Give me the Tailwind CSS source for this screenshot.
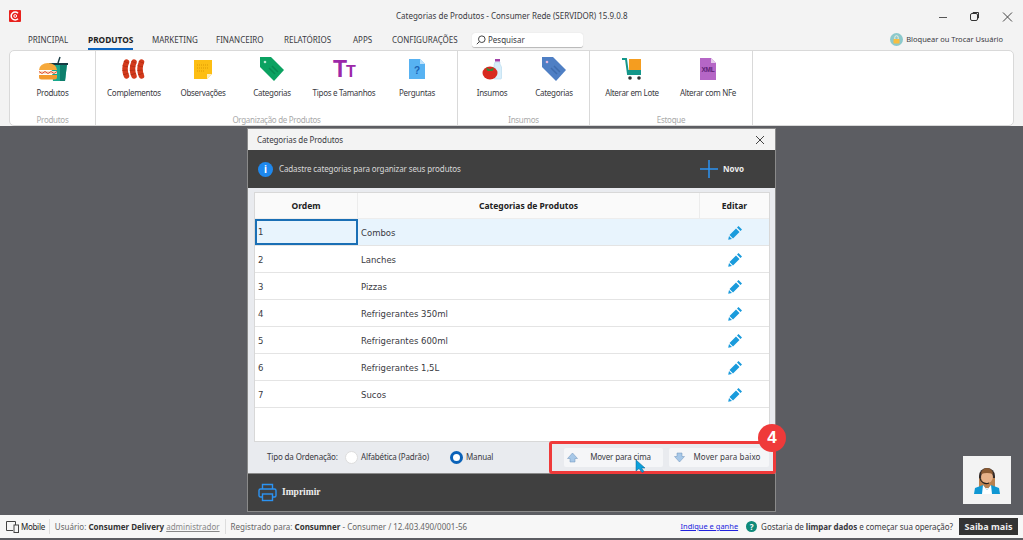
<!DOCTYPE html>
<html lang="pt-BR">
<head>
    <meta charset="UTF-8">
    <title>Categorias de Produtos - Consumer Rede</title>
    <script src="https://cdn.jsdelivr.net/npm/@tailwindcss/browser@4"></script>
</head>
<body class="w-[1023px] h-[540px] overflow-hidden bg-[#f3f3f3] font-['Noto_Sans',sans-serif] text-[8px] text-[#3a3a42] flex flex-col">

    <!-- Barra de titulo -->
    <div class="h-[33px] shrink-0 flex items-center relative">
        <div class="ml-[9px] mb-[1px] w-[12px] h-[12px] bg-[#e8211d] rounded-[1px] flex items-center justify-center">
            <svg width="10" height="10" viewBox="0 0 10 10" fill="none" stroke="#fff"><path d="M8 2.2A4 4 0 1 0 8 7.8" stroke-width="1.5"/><circle cx="5.2" cy="5" r="1.4" stroke-width="1"/></svg>
        </div>
        <div class="w-[229px] ml-[375px] mb-[1px] text-center whitespace-nowrap">Categorias de Produtos - Consumer Rede (SERVIDOR) 15.9.0.8</div>
        <div class="ml-auto flex items-center">
            <svg width="32" height="12" viewBox="0 0 32 12" fill="none" stroke="#555"><path d="M10 6.5h8"/></svg>
            <svg width="32" height="12" viewBox="0 0 32 12" fill="none" stroke="#333"><rect x="9.500" y="2.500" width="7" height="7" rx="1.500"/><path d="M12 2V1.500h5.500V7H17"/></svg>
            <svg width="30" height="12" viewBox="0 0 30 12" fill="none" stroke="#444"><path d="M10 1.500l9 9M19 1.500l-9 9"/></svg>
        </div>
    </div>

    <!-- Abas -->
    <div class="h-[17px] shrink-0 flex items-start pl-[28px] whitespace-nowrap">
        <div class="w-[60px] pt-[1px]">PRINCIPAL</div>
        <div class="w-[64px] pt-[1px]"><span class="block w-[45px] h-[16px] font-bold text-[8.3px] text-[#222] border-b-[2px] border-[#0a64c0]">PRODUTOS</span></div>
        <div class="w-[64px] pt-[1px]">MARKETING</div>
        <div class="w-[68px] pt-[1px]">FINANCEIRO</div>
        <div class="w-[69px] pt-[1px]">RELATÓRIOS</div>
        <div class="w-[39px] pt-[1px]">APPS</div>
        <div class="w-[80px] pt-[1px]">CONFIGURAÇÕES</div>
        <div class="w-[111px] h-[15px] bg-white rounded-[3px] border-b border-[#bbb] shadow-[0_0_1px_#ccc] flex items-center pl-[4px] gap-[2px]">
            <svg width="10" height="10" viewBox="0 0 10 10" fill="none" stroke="#444"><circle cx="5.800" cy="4.200" r="3.300"/><path d="M3.400 6.600L.8 9.200"/></svg>
            <span>Pesquisar</span>
        </div>
        <div class="ml-auto mr-[20px] flex items-center gap-[3px]">
            <svg width="13" height="13" viewBox="0 0 13 13"><circle cx="6.500" cy="6.500" r="6.500" fill="#8cc9cc"/><rect x="3.500" y="6" width="6" height="4.500" rx=".6" fill="#f6bd41"/><path d="M4.800 6V4.400a1.700 1.700 0 0 1 3.400 0V6" fill="none" stroke="#f3f0dc" stroke-width="1"/></svg>
            <span class="text-[7.5px]">Bloquear ou Trocar Usuário</span>
        </div>
    </div>

    <!-- Ribbon -->
    <div class="mx-[9px] h-[76px] w-[1005px] shrink-0 bg-white border border-[#d9d9d9] rounded-[5px] flex tracking-[-0.3px]">
        <div class="w-[86px] flex flex-col border-r border-[#d9d9d9]">
            <div class="flex-1 flex">
                <div class="w-[85px] flex flex-col items-center pt-[5px]">
                    <svg class="h-[26px]" width="30" height="26" viewBox="0 0 30 26"><path d="M13 8h16l-2 17H15z" fill="#18a88e"/><path d="M22 8h7l-2 17h-5z" fill="#0d7f6c"/><path d="M11 7h19v2H11z" fill="#173b44"/><path d="M20 7l2-6" stroke="#173b44" stroke-width="1.400"/><path d="M1 14a9 7 0 0 1 18 0z" fill="#f6a93b"/><path d="M1 15h18v3H1z" fill="#fbe2c6"/><path d="M1 15.500l3 2 3-2 3 2 3-2 3 2 3-2" fill="none" stroke="#e2503a" stroke-width="1"/><path d="M1 19h18v2a2.500 2.500 0 0 1-2.500 2.500h-13A2.500 2.500 0 0 1 1 21z" fill="#f39a2e"/></svg>
                    <div class="mt-[5px] leading-[12px]">Produtos</div>
                </div>
            </div>
            <div class="h-[12px] text-center text-[#aaa] leading-[14px]">Produtos</div>
        </div>
        <div class="w-[362px] flex flex-col border-r border-[#d9d9d9]">
            <div class="flex-1 flex">
                <div class="w-[76px] flex flex-col items-center pt-[5px]">
                    <svg class="h-[26px]" width="24" height="26" viewBox="0 0 24 26" fill="none" stroke-linecap="round"><g stroke="#d33a1c" stroke-width="5.500"><path d="M4.500 6Q1.500 13 4.500 20"/><path d="M12 6Q9 13 12 20"/><path d="M19.500 6Q16.500 13 19.500 20"/></g><g stroke="#a82a10" stroke-width="5.500" stroke-dasharray=".6 3.400" stroke-linecap="butt"><path d="M4.500 6Q1.500 13 4.500 20"/><path d="M12 6Q9 13 12 20"/><path d="M19.500 6Q16.500 13 19.500 20"/></g></svg>
                    <div class="mt-[5px] leading-[12px]">Complementos</div>
                </div>
                <div class="w-[62px] flex flex-col items-center pt-[5px]">
                    <svg class="h-[26px]" width="20" height="26" viewBox="0 0 20 26"><path d="M1 4h18v14l-5 5H1z" fill="#fdbe13"/><path d="M14 23l5-5h-5z" fill="#fdeec0"/><path d="M4 9h12M4 12h12M4 15h8" stroke="#dd9a05" stroke-dasharray="1 1"/></svg>
                    <div class="mt-[5px] leading-[12px]">Observações</div>
                </div>
                <div class="w-[76px] flex flex-col items-center pt-[5px]">
                    <svg class="h-[26px]" width="26" height="26" viewBox="0 0 26 26"><path d="M1 1h11l13 13-10 11L1 11z" fill="#0ba261"/><circle cx="6" cy="6" r="1.300" fill="#b9e7cf"/><path d="M10 12l6 6M13 10l6 6" stroke="#088a52" stroke-width="1.500"/></svg>
                    <div class="mt-[5px] leading-[12px]">Categorias</div>
                </div>
                <div class="w-[68px] flex flex-col items-center pt-[5px]">
                    <svg class="h-[26px]" width="26" height="26" viewBox="0 0 26 26"><text x="2" y="21" font-family="Liberation Sans" font-weight="700" font-size="23" fill="#9c27a8">T</text><text x="15" y="21" font-family="Liberation Sans" font-weight="700" font-size="16" fill="#9c27a8">T</text></svg>
                    <div class="mt-[5px] leading-[12px] whitespace-nowrap">Tipos e Tamanhos</div>
                </div>
                <div class="w-[78px] flex flex-col items-center pt-[5px]">
                    <svg class="h-[26px]" width="18" height="26" viewBox="0 0 18 26"><path d="M1 3h11l5 5v15H1z" fill="#57b2f2"/><path d="M12 3l5 5h-5z" fill="#bde1fb"/><text x="9" y="18" text-anchor="middle" font-family="Liberation Sans" font-weight="700" font-size="10" fill="#1a63b5">?</text></svg>
                    <div class="mt-[5px] leading-[12px]">Perguntas</div>
                </div>
            </div>
            <div class="h-[12px] text-center text-[#aaa] leading-[14px]">Organização de Produtos</div>
        </div>
        <div class="w-[132px] flex flex-col border-r border-[#d9d9d9]">
            <div class="flex-1 flex">
                <div class="w-[68px] flex flex-col items-center pt-[5px]">
                    <svg class="h-[26px]" width="20" height="26" viewBox="0 0 20 26"><path d="M13 6h5v2l1.500 3v11a1 1 0 0 1-1 1H12V9z" fill="#d8eefa" stroke="#a9d3ea" stroke-width=".5"/><rect x="13" y="3" width="5" height="2.500" fill="#a142a8"/><ellipse cx="8" cy="17" rx="7.500" ry="6.500" fill="#d8291f"/><path d="M4 11.500l4 2 4-2-1.500 3.500h-5z" fill="#2c8f3b"/></svg>
                    <div class="mt-[5px] leading-[12px]">Insumos</div>
                </div>
                <div class="w-[56px] flex flex-col items-center pt-[5px]">
                    <svg class="h-[26px]" width="26" height="26" viewBox="0 0 26 26"><path d="M1 1h11l13 13-10 11L1 11z" fill="#4f7fc4"/><circle cx="6" cy="6" r="1.300" fill="#e4b7dd"/><path d="M10 12l6 6M13 10l6 6" stroke="#3f6cae" stroke-width="1.500"/></svg>
                    <div class="mt-[5px] leading-[12px]">Categorias</div>
                </div>
            </div>
            <div class="h-[12px] text-center text-[#aaa] leading-[14px]">Insumos</div>
        </div>
        <div class="w-[163px] flex flex-col border-r border-[#d9d9d9]">
            <div class="flex-1 flex">
                <div class="w-[84px] flex flex-col items-center pt-[5px]">
                    <svg class="h-[26px]" width="20" height="26" viewBox="0 0 20 26"><rect x="7" y="3" width="12" height="11" fill="#f59d1f"/><path d="M0 3h4l2 15h13" fill="none" stroke="#14978a" stroke-width="2"/><path d="M6 14h13v5H6z" fill="#14978a"/><circle cx="8" cy="22" r="1.800" fill="#333"/><circle cx="17" cy="22" r="1.800" fill="#333"/></svg>
                    <div class="mt-[5px] leading-[12px] whitespace-nowrap">Alterar em Lote</div>
                </div>
                <div class="w-[68px] flex flex-col items-center pt-[5px]">
                    <svg class="h-[26px]" width="18" height="26" viewBox="0 0 18 26"><path d="M1 2h11l5 5v17H1z" fill="#b566c6"/><path d="M12 2l5 5h-5z" fill="#e5c9ec"/><text x="9" y="15.500" text-anchor="middle" font-family="Liberation Sans" font-weight="700" font-size="6.500" fill="#5e2277">XML</text></svg>
                    <div class="mt-[5px] leading-[12px] whitespace-nowrap">Alterar com NFe</div>
                </div>
            </div>
            <div class="h-[12px] text-center text-[#aaa] leading-[14px]">Estoque</div>
        </div>
    </div>

    <!-- Area principal -->
    <div class="relative flex-1 bg-[#5c5d62] pt-[2px] pl-[247px]">
        <div class="relative w-[529px] h-[384px] border border-[#8a8a8a] bg-[#e9ebef] flex flex-col">
            <div class="h-[21px] shrink-0 bg-[#f3f3f3] flex items-center justify-between pl-[9px] pr-[10px] tracking-[-0.1px]">
                <span>Categorias de Produtos</span>
                <svg width="10" height="10" viewBox="0 0 10 10" fill="none" stroke="#444"><path d="M1 1l8 8M9 1l-8 8"/></svg>
            </div>
            <div class="h-[38px] shrink-0 bg-[#404040] flex items-center pl-[10px] text-[#d8d8d8] whitespace-nowrap">
                <div class="w-[15px] h-[15px] rounded-full bg-[#1e88ee] text-white font-bold text-[10px] leading-none flex items-center justify-center">i</div>
                <span class="ml-[6px] tracking-[-0.12px]">Cadastre categorias para organizar seus produtos</span>
                <svg class="ml-auto" width="18" height="18" viewBox="0 0 18 18" stroke="#2b93f2" stroke-width="1.500"><path d="M9 0v18M0 9h18"/></svg>
                <span class="ml-[5px] mr-[31px] font-bold text-[#eee]">Novo</span>
            </div>
            <div class="flex-1 pl-[6px] pr-[5px] pt-[4px]">
                <div class="h-[250px] bg-white border border-[#d8d8d8] font-['DejaVu_Sans',sans-serif] text-[8.5px]">
                    <div class="h-[26px] flex bg-[#fafafa] font-['Noto_Sans',sans-serif] font-bold text-[8.5px] text-[#222] text-center leading-[26px] border-b border-[#ededed]">
                        <div class="w-[103px] border-r border-[#ececec]">Ordem</div>
                        <div class="w-[342px] border-r border-[#ececec]">Categorias de Produtos</div>
                        <div class="flex-1">Editar</div>
                    </div>
                    <div class="h-[27px] flex items-stretch bg-[#e8f4fd] border-b border-[#e4e4e4]">
                        <div class="w-[103px] border-2 border-[#1a6fb5] pl-[1px] flex items-center">1</div>
                        <div class="w-[342px] pl-[3px] pt-[2px] flex items-center">Combos</div>
                        <div class="flex-1 pl-[1px] flex items-center justify-center"><svg width="15" height="15" viewBox="0 0 15 15" fill="#1a9bdc"><path d="M10.500 1l3.500 3.500-1.500 1.500L9 2.500zM8 3.500L11.500 7 5 13.500 1.500 10zM1 11l3 3-3.800.800z"/></svg></div>
                    </div>
                    <div class="h-[27px] flex items-stretch border-b border-[#e4e4e4]">
                        <div class="w-[103px] pl-[3px] pt-[2px] flex items-center">2</div>
                        <div class="w-[342px] pl-[3px] pt-[2px] flex items-center">Lanches</div>
                        <div class="flex-1 pl-[1px] flex items-center justify-center"><svg width="15" height="15" viewBox="0 0 15 15" fill="#1a9bdc"><path d="M10.500 1l3.500 3.500-1.500 1.500L9 2.500zM8 3.500L11.500 7 5 13.500 1.500 10zM1 11l3 3-3.800.800z"/></svg></div>
                    </div>
                    <div class="h-[27px] flex items-stretch border-b border-[#e4e4e4]">
                        <div class="w-[103px] pl-[3px] pt-[2px] flex items-center">3</div>
                        <div class="w-[342px] pl-[3px] pt-[2px] flex items-center">Pizzas</div>
                        <div class="flex-1 pl-[1px] flex items-center justify-center"><svg width="15" height="15" viewBox="0 0 15 15" fill="#1a9bdc"><path d="M10.500 1l3.500 3.500-1.500 1.500L9 2.500zM8 3.500L11.500 7 5 13.500 1.500 10zM1 11l3 3-3.800.800z"/></svg></div>
                    </div>
                    <div class="h-[27px] flex items-stretch border-b border-[#e4e4e4]">
                        <div class="w-[103px] pl-[3px] pt-[2px] flex items-center">4</div>
                        <div class="w-[342px] pl-[3px] pt-[2px] flex items-center">Refrigerantes 350ml</div>
                        <div class="flex-1 pl-[1px] flex items-center justify-center"><svg width="15" height="15" viewBox="0 0 15 15" fill="#1a9bdc"><path d="M10.500 1l3.500 3.500-1.500 1.500L9 2.500zM8 3.500L11.500 7 5 13.500 1.500 10zM1 11l3 3-3.800.800z"/></svg></div>
                    </div>
                    <div class="h-[27px] flex items-stretch border-b border-[#e4e4e4]">
                        <div class="w-[103px] pl-[3px] pt-[2px] flex items-center">5</div>
                        <div class="w-[342px] pl-[3px] pt-[2px] flex items-center">Refrigerantes 600ml</div>
                        <div class="flex-1 pl-[1px] flex items-center justify-center"><svg width="15" height="15" viewBox="0 0 15 15" fill="#1a9bdc"><path d="M10.500 1l3.500 3.500-1.500 1.500L9 2.500zM8 3.500L11.500 7 5 13.500 1.500 10zM1 11l3 3-3.800.800z"/></svg></div>
                    </div>
                    <div class="h-[27px] flex items-stretch border-b border-[#e4e4e4]">
                        <div class="w-[103px] pl-[3px] pt-[2px] flex items-center">6</div>
                        <div class="w-[342px] pl-[3px] pt-[2px] flex items-center">Refrigerantes 1,5L</div>
                        <div class="flex-1 pl-[1px] flex items-center justify-center"><svg width="15" height="15" viewBox="0 0 15 15" fill="#1a9bdc"><path d="M10.500 1l3.500 3.500-1.500 1.500L9 2.500zM8 3.500L11.500 7 5 13.500 1.500 10zM1 11l3 3-3.800.800z"/></svg></div>
                    </div>
                    <div class="h-[27px] flex items-stretch border-b border-[#e4e4e4]">
                        <div class="w-[103px] pl-[3px] pt-[2px] flex items-center">7</div>
                        <div class="w-[342px] pl-[3px] pt-[2px] flex items-center">Sucos</div>
                        <div class="flex-1 pl-[1px] flex items-center justify-center"><svg width="15" height="15" viewBox="0 0 15 15" fill="#1a9bdc"><path d="M10.500 1l3.500 3.500-1.500 1.500L9 2.500zM8 3.500L11.500 7 5 13.500 1.500 10zM1 11l3 3-3.800.800z"/></svg></div>
                    </div>
                </div>
                <div class="h-[30px] flex items-center pl-[13px] whitespace-nowrap tracking-[-0.15px]">
                    <span class="w-[78px]">Tipo da Ordenação:</span>
                    <span class="w-[13px] h-[13px] rounded-full bg-white border border-[#ddd]"></span>
                    <span class="ml-[3px] w-[89px]">Alfabética (Padrão)</span>
                    <span class="w-[13px] h-[13px] rounded-full bg-white border-[3px] border-[#0b62b8]"></span>
                    <span class="ml-[3px]">Manual</span>
                    <div class="ml-auto mr-[1px] flex gap-[6px]">
                        <div class="w-[99px] h-[19px] bg-[#f5f6f8] rounded-[2px] flex items-center pl-[3px]">
                            <svg width="11" height="11" viewBox="0 0 11 11"><path d="M5.500 1L10.500 6.500H8V10H3V6.500H.5z" fill="#a7c8e8" stroke="#6f93b8" stroke-width=".5"/></svg>
                            <span class="flex-1 text-center">Mover para cima</span>
                        </div>
                        <div class="w-[100px] h-[19px] bg-[#f5f6f8] rounded-[2px] flex items-center pl-[5px]">
                            <svg width="11" height="11" viewBox="0 0 11 11"><path d="M5.500 10L10.500 4.500H8V1H3V4.500H.5z" fill="#a7c8e8" stroke="#6f93b8" stroke-width=".5"/></svg>
                            <span class="flex-1 text-center tracking-[0.1px]">Mover para baixo</span>
                        </div>
                    </div>
                </div>
            </div>
            <div class="h-[38px] shrink-0 bg-[#404040] border-t border-[#8a8a8a] flex items-center pl-[10px]">
                <svg width="19" height="19" viewBox="0 0 19 19" fill="none" stroke="#2b93f2" stroke-width="1.400"><path d="M4.500 6V1.500h10V6"/><rect x="1" y="6" width="17" height="8" rx="1.500"/><rect x="4.500" y="11" width="10" height="6.500" fill="#404040"/></svg>
                <span class="ml-[5px] font-bold text-[#eee] font-['Liberation_Serif',serif] text-[9.5px]">Imprimir</span>
            </div>
            <!-- Destaque do tutorial -->
            <div class="absolute left-[301px] top-[312px] w-[227px] h-[33px] border-[3px] border-[#ef3a3a] rounded-[3px]"></div>
            <div class="absolute left-[510px] top-[295px] w-[28px] h-[28px] rounded-full bg-[#ef3a3a] text-white font-bold text-[17px] flex items-center justify-center font-['Liberation_Sans',sans-serif]">4</div>
            <svg class="absolute left-[387px] top-[331px]" width="11" height="13" viewBox="0 0 11 13"><path d="M1 0v11l3-2.500 3 4 2-1-2.500-3.500H10z" fill="#0aa1dc" stroke="#0a5f8c" stroke-width=".5"/></svg>
        </div>
        <!-- Atendente -->
        <div class="absolute left-[963px] top-[330px] w-[48px] h-[48px] bg-[#f3f3f3] flex items-center justify-center">
            <svg width="26" height="28" viewBox="0 0 26 28"><path d="M5 10a8 8 0 0 1 16 0v3H5z" fill="#332a28"/><path d="M5 12h16v10H5z" fill="#b9814f"/><circle cx="13" cy="11" r="6" fill="#e6b189"/><path d="M7 8a6 6 0 0 1 12 0q-6-2-12 0z" fill="#8a5a33"/><path d="M0 28l1-6 8-3 4 5 4-5 8 3 1 6z" fill="#0f97d3"/><path d="M9 19l4 5 4-5 1 9H8z" fill="#fff"/><path d="M6 12a6.500 6.500 0 0 0 9 5" fill="none" stroke="#222" stroke-width="1.200"/></svg>
        </div>
    </div>

    <!-- Barra de status -->
    <div class="h-[25px] shrink-0 bg-[#f7f7f7] border-b-[2px] border-[#5c5d62] flex items-center pl-[6px] whitespace-nowrap">
        <svg width="13" height="13" viewBox="0 0 13 13" fill="none" stroke="#444"><path d="M7 10.500H.5V1.500h9V5"/><rect x="8" y="5" width="4.500" height="7.500"/></svg>
        <span class="ml-[2px] text-[#222] tracking-[-0.3px]">Mobile</span>
        <span class="ml-[4px] h-[15px] border-l border-[#ddd]"></span>
        <span class="ml-[5px] text-[#666]">Usuário: <b class="text-[#333]">Consumer Delivery</b> <u class="text-[#888]">administrador</u></span>
        <span class="ml-[5px] h-[15px] border-l border-[#ddd]"></span>
        <span class="ml-[5px] text-[#666]">Registrado para: <b class="text-[#333]">Consumner</b> - Consumer / 12.403.490/0001-56</span>
        <u class="ml-auto text-[7.5px] text-[#2222dd]">Indique e ganhe</u>
        <span class="ml-[8px] w-[11px] h-[11px] rounded-full bg-[#0f8a7a] text-white text-[8px] font-bold flex items-center justify-center">?</span>
        <span class="ml-[4px] tracking-[-0.05px]">Gostaria de <b>limpar dados</b> e começar sua operação?</span>
        <span class="ml-[6px] mr-[5px] w-[59px] h-[17px] bg-[#333] text-[#eee] text-[9px] font-bold flex items-center justify-center">Saiba mais</span>
    </div>

</body>
</html>
